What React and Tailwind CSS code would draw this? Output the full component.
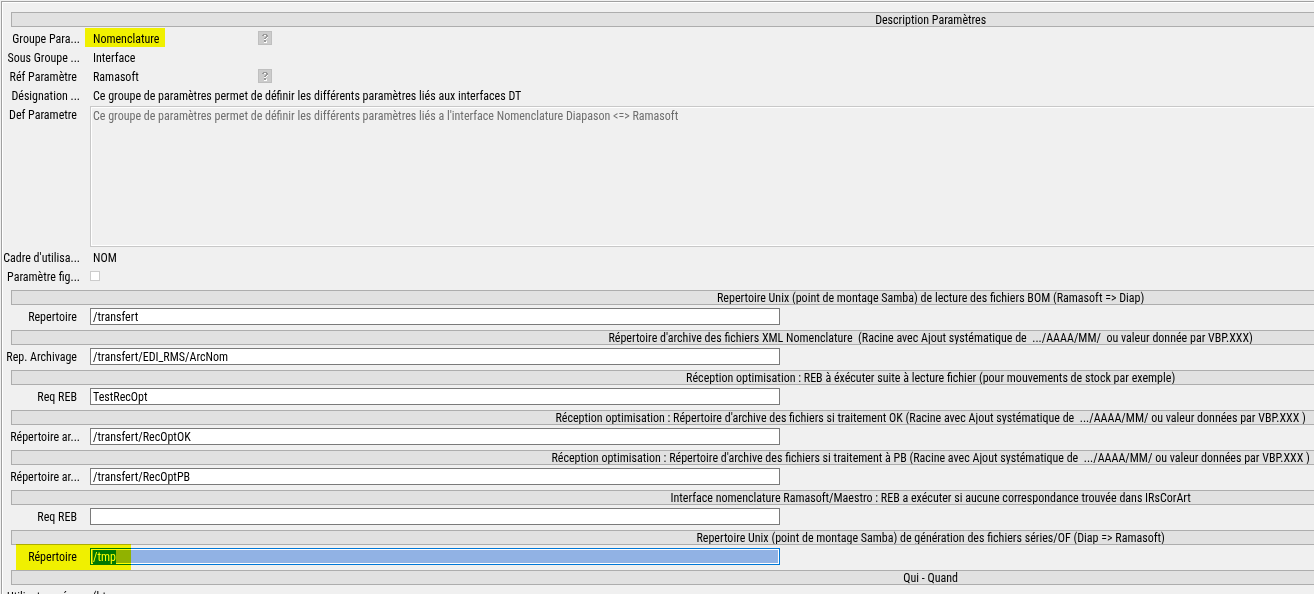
import React, { useEffect, useRef, useState } from "react";

const sections = [
  {
    id: "bom",
    title:
      "Repertoire Unix (point de montage Samba) de lecture des fichiers BOM (Ramasoft => Diap)",
    label: "Repertoire",
    value: "/transfert",
  },
  {
    id: "archive-xml",
    title:
      "Répertoire d'archive des fichiers XML Nomenclature  (Racine avec Ajout systématique de  .../AAAA/MM/  ou valeur donnée par VBP.XXX)",
    label: "Rep. Archivage",
    value: "/transfert/EDI_RMS/ArcNom",
  },
  {
    id: "req-reception",
    title:
      "Réception optimisation : REB à éxécuter suite à lecture fichier (pour mouvements de stock par exemple)",
    label: "Req REB",
    value: "TestRecOpt",
  },
  {
    id: "archive-ok",
    title:
      "Réception optimisation : Répertoire d'archive des fichiers si traitement OK (Racine avec Ajout systématique de  .../AAAA/MM/ ou valeur données par VBP.XXX )",
    label: "Répertoire ar...",
    value: "/transfert/RecOptOK",
  },
  {
    id: "archive-pb",
    title:
      "Réception optimisation : Répertoire d'archive des fichiers si traitement à PB (Racine avec Ajout systématique de  .../AAAA/MM/ ou valeur données par VBP.XXX )",
    label: "Répertoire ar...",
    value: "/transfert/RecOptPB",
  },
  {
    id: "req-maestro",
    title:
      "Interface nomenclature Ramasoft/Maestro : REB a exécuter si aucune correspondance trouvée dans IRsCorArt",
    label: "Req REB",
    value: "",
  },
  {
    id: "series",
    title:
      "Repertoire Unix (point de montage Samba) de génération des fichiers séries/OF (Diap => Ramasoft)",
    label: "Répertoire",
    value: "/tmp",
    active: true,
  },
];

function TitleBar({ children }) {
  return (
    <h2 className="ml-2 h-[15px] border border-[#adadad] bg-[#e1e1e1] text-center">
      <span className="block h-[13px] overflow-hidden whitespace-pre leading-[14px]">
        {children}
      </span>
    </h2>
  );
}

function Label({ text, htmlFor }) {
  const cut = text.endsWith("...");
  return (
    <label
      htmlFor={htmlFor}
      className={`flex w-[77px] shrink-0 justify-end whitespace-nowrap pt-0.5 ${
        cut ? "" : "pr-[3px]"
      }`}
    >
      {text}
    </label>
  );
}

function HelpButton({ label }) {
  return (
    <button
      type="button"
      aria-label={label}
      className="mb-px flex size-[14px] items-center justify-center border border-[#bfbfbf] bg-[#cccccc]"
    >
      <svg viewBox="0 0 8 10" className="h-[10px] w-2" shapeRendering="crispEdges">
        <path
          d="M2 2h5v3h-1v1h-1v1h-2v-1h1v-1h1v-2h-3zM3 8h3v2h-3z"
          fill="#fff"
        />
        <path
          d="M2 1h4v1h1v2h-1v1h-1v1h-2v-1h1v-1h1v-2h-2v1h-2v-1h1zM3 7h2v2h-2z"
          fill="#999"
        />
      </svg>
    </button>
  );
}

function InfoRow({ label, value, help, marked }) {
  return (
    <div className="flex h-[19px] items-center">
      <Label text={label} />
      <div className="relative flex w-[178px] items-center whitespace-nowrap pl-[13px]">
        <span className="pt-0.5">{value}</span>
        {marked && (
          <span className="absolute -top-[3px] left-[5px] h-[19px] w-20 bg-[#ffff00] mix-blend-multiply" />
        )}
      </div>
      {help && <HelpButton label={`Aide ${label}`} />}
    </div>
  );
}

function Section({ section }) {
  const [value, setValue] = useState(section.value);
  const inputRef = useRef(null);

  useEffect(() => {
    if (section.active) {
      inputRef.current.focus();
      inputRef.current.select();
    }
  }, [section.active]);

  return (
    <section className="mb-[5px]">
      <TitleBar>{section.title}</TitleBar>
      <div className="relative mt-[3px] flex h-[17px] items-center">
        <Label text={section.label} htmlFor={section.id} />
        <input
          id={section.id}
          ref={inputRef}
          type="text"
          value={value}
          onChange={(e) => setValue(e.target.value)}
          className={`ml-[10px] h-[17px] w-[690px] border px-[2px] outline-none selection:bg-[#0078d7] selection:text-white ${
            section.active
              ? "border-[#0078d7] bg-[#91b2e4] inset-ring inset-ring-white"
              : "border-[#7a7a7a] bg-white"
          }`}
        />
        {section.active && (
          <span className="pointer-events-none absolute -top-1 left-[13px] h-[26px] w-[115px] bg-[#ffff00] mix-blend-multiply" />
        )}
      </div>
    </section>
  );
}

export default function App() {
  return (
    <div className="h-screen overflow-hidden bg-[#f0f0f0] pl-px pt-px font-['Roboto_Condensed','Roboto',sans-serif] text-[12px] leading-[13px] text-black">
      <div className="h-full w-[141%] border-l border-t border-[#a0a0a0]">
        <form className="h-full border-l border-t border-white pr-0.5 pt-[9px]">
          <TitleBar>Description Paramètres</TitleBar>
          <div className="mt-[2px]">
            <InfoRow label="Groupe Para..." value="Nomenclature" help marked />
            <InfoRow label="Sous Groupe ..." value="Interface" />
            <InfoRow label="Réf Paramètre" value="Ramasoft" help />
            <InfoRow
              label="Désignation ..."
              value="Ce groupe de paramètres permet de définir les différents paramètres liés aux interfaces DT"
            />
          </div>
          <div className="mt-px flex items-start">
            <div className="pt-px">
              <Label text="Def Parametre" htmlFor="definition" />
            </div>
            <textarea
              id="definition"
              disabled
              className="ml-[10px] h-[141px] flex-1 resize-none border border-[#c8c8c8] px-[2px] py-[3px] text-[#6d6d6d] inset-ring inset-ring-white"
              defaultValue="Ce groupe de paramètres permet de définir les différents paramètres liés a l'interface Nomenclature Diapason <=> Ramasoft"
            />
          </div>
          <div className="mb-1 mt-px">
            <InfoRow label="Cadre d'utilisa..." value="NOM" />
            <div className="flex h-[19px] items-center">
              <Label text="Paramètre fig..." htmlFor="fige" />
              <input
                id="fige"
                type="checkbox"
                disabled
                className="mb-px ml-[10px] size-[10px] appearance-none border border-[#cccccc] bg-white"
              />
            </div>
          </div>

          {sections.map((section) => (
            <Section key={section.id} section={section} />
          ))}

          <TitleBar>Qui - Quand</TitleBar>
          <div className="mt-[3px] flex h-[19px] items-center whitespace-nowrap pl-1">
            Utilisateur réseau (bt
          </div>
        </form>
      </div>
    </div>
  );
}
